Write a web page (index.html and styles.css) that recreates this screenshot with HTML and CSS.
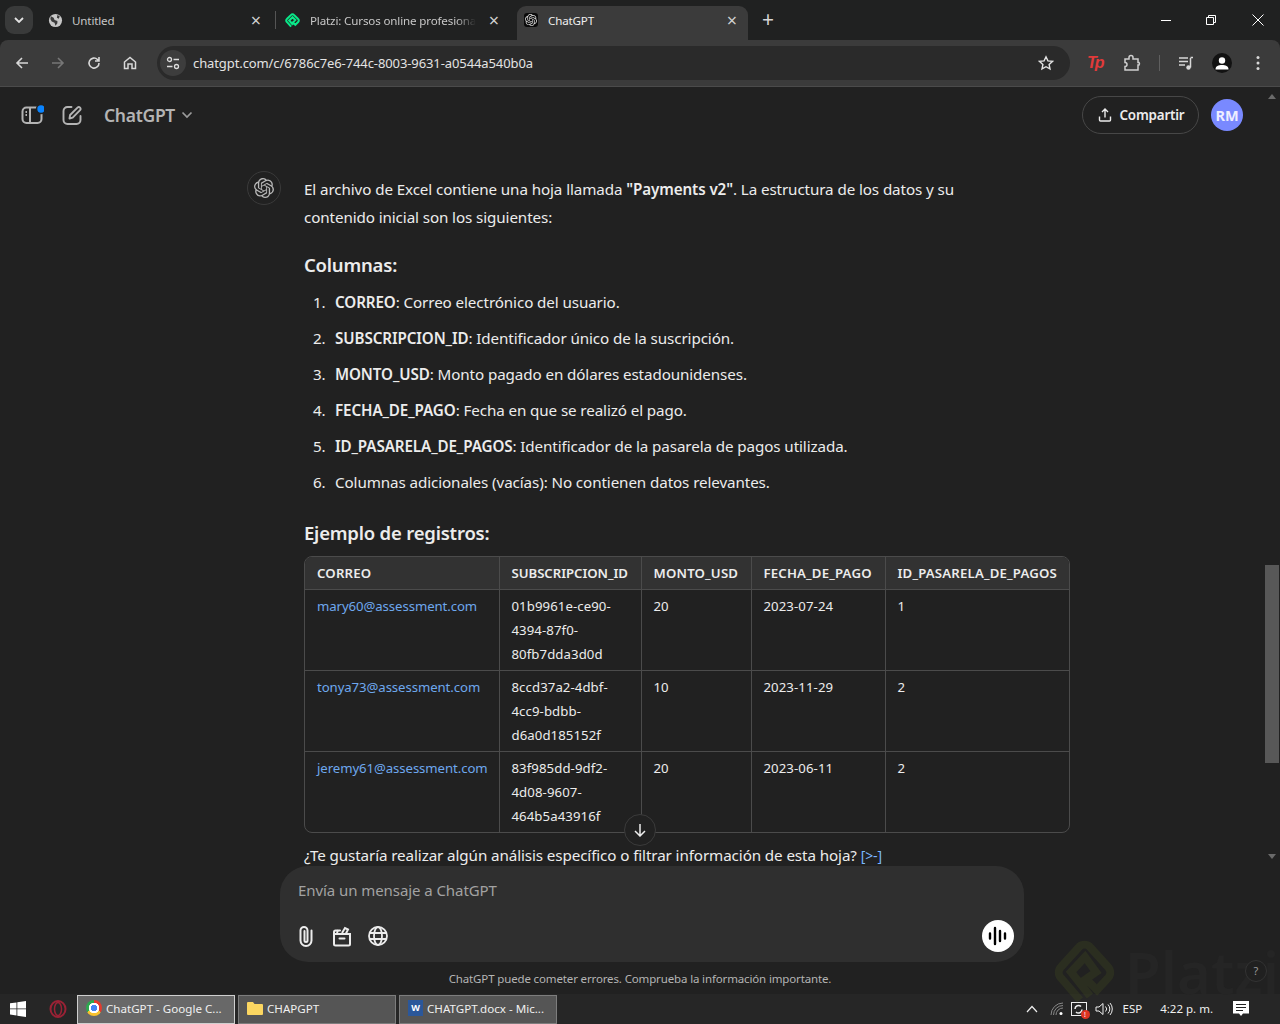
FILE: index.html
```html
<!DOCTYPE html>
<html lang="es">
<head>
<meta charset="utf-8">
<title>ChatGPT</title>
<link rel="stylesheet" href="styles.css">
</head>
<body>
<svg class="defs" width="0" height="0"><defs><symbol id="oai" viewBox="0 0 24 24"><path fill="currentColor" d="M22.2819 9.8211a5.9847 5.9847 0 0 0-.5157-4.9108 6.0462 6.0462 0 0 0-6.5098-2.9A6.0651 6.0651 0 0 0 4.9807 4.1818a5.9847 5.9847 0 0 0-3.9977 2.9 6.0462 6.0462 0 0 0 .7427 7.0966 5.98 5.98 0 0 0 .511 4.9107 6.051 6.051 0 0 0 6.5146 2.9001A5.9847 5.9847 0 0 0 13.2599 24a6.0557 6.0557 0 0 0 5.7718-4.2058 5.9894 5.9894 0 0 0 3.9977-2.9001 6.0557 6.0557 0 0 0-.7475-7.0729zm-9.022 12.6081a4.4755 4.4755 0 0 1-2.8764-1.0408l.1419-.0804 4.7783-2.7582a.7948.7948 0 0 0 .3927-.6813v-6.7369l2.02 1.1686a.071.071 0 0 1 .038.052v5.5826a4.504 4.504 0 0 1-4.4945 4.4944zm-9.6607-4.1254a4.4708 4.4708 0 0 1-.5346-3.0137l.142.0852 4.783 2.7582a.7712.7712 0 0 0 .7806 0l5.8428-3.3685v2.3324a.0804.0804 0 0 1-.0332.0615L9.74 19.9502a4.4992 4.4992 0 0 1-6.1408-1.6464zM2.3408 7.8956a4.485 4.485 0 0 1 2.3655-1.9728V11.6a.7664.7664 0 0 0 .3879.6765l5.8144 3.3543-2.0201 1.1685a.0757.0757 0 0 1-.071 0l-4.8303-2.7865A4.504 4.504 0 0 1 2.3408 7.872zm16.5963 3.8558L13.1038 8.364 15.1192 7.2a.0757.0757 0 0 1 .071 0l4.8303 2.7913a4.4944 4.4944 0 0 1-.6765 8.1042v-5.6772a.79.79 0 0 0-.407-.667zm2.0107-3.0231l-.142-.0852-4.7735-2.7818a.7759.7759 0 0 0-.7854 0L9.409 9.2297V6.8974a.0662.0662 0 0 1 .0284-.0615l4.8303-2.7866a4.4992 4.4992 0 0 1 6.6802 4.66zM8.3065 12.863l-2.02-1.1638a.0804.0804 0 0 1-.038-.0567V6.0742a4.4992 4.4992 0 0 1 7.3757-3.4537l-.142.0805L8.704 5.459a.7948.7948 0 0 0-.3927.6813zm1.0976-2.3654l2.602-1.4998 2.6069 1.4998v2.9994l-2.5974 1.4997-2.6067-1.4997Z"/></symbol></defs></svg>
<div class="screen">
  <div class="tabstrip">
    <div class="tabsearch"><svg width="10" height="6" viewBox="0 0 10 6"><path d="M1 1l4 4 4-4" fill="none" stroke="#e3e3e3" stroke-width="1.8"/></svg></div>
    <div class="tab tab-one">
      <svg class="favicon" viewBox="0 0 16 16"><circle cx="8" cy="8" r="7" fill="#c7c7c7"/><path d="M3 3.500l3 1.500 1 2.500 3 1v2.500l-2 2.500-1-3-3-1.500-1.500-2.500zM10 2l2.500 1.500-1 2.500-2-1z" fill="#3a3a3a"/></svg>
      <span class="tab-title">Untitled</span>
      <span class="tab-x">×</span>
    </div>
    <i class="tabsep"></i>
    <div class="tab tab-two">
      <svg class="favicon" viewBox="0 0 16 16"><path d="M6.500 14.500 2 9.500a2 2 0 0 1 0-3L6.500 2a2 2 0 0 1 3 0L14 6.500a2 2 0 0 1 0 3l-3 3-2.500-2.500 2.500-2.500L8 4.500 4.500 8l4 4.500" fill="none" stroke="#0ae98a" stroke-width="2.200"/></svg>
      <span class="tab-title tab-fade">Platzi: Cursos online profesionales</span>
      <span class="tab-x">×</span>
    </div>
    <div class="tab tab-active">
      <span class="favicon-box"><svg width="12" height="12" class="oai-light"><use href="#oai"/></svg></span>
      <span class="tab-title tab-title-active">ChatGPT</span>
      <span class="tab-x tab-x-active">×</span>
    </div>
    <span class="newtab">+</span>
    <div class="winctl">
      <svg class="winbtn" width="12" height="12" viewBox="0 0 12 12"><path d="M1 6.500h10" stroke="#fff"/></svg>
      <svg class="winbtn" width="12" height="12" viewBox="0 0 12 12"><path d="M1.500 3.500h7v7h-7zM3.500 3.500v-2h7v7h-2" fill="none" stroke="#fff"/></svg>
      <svg class="winbtn winclose" width="12" height="12" viewBox="0 0 12 12"><path d="M.5.500l11 11M11.500.500l-11 11" stroke="#fff"/></svg>
    </div>
  </div>
  <div class="toolbar">
    <div class="navbtns">
      <svg class="navbtn" viewBox="0 0 16 16"><path d="M14 8H3M8 3 3 8l5 5" fill="none" stroke="#d8d8d8" stroke-width="1.600"/></svg>
      <svg class="navbtn" viewBox="0 0 16 16"><path d="M2 8h11M8 3l5 5-5 5" fill="none" stroke="#777" stroke-width="1.600"/></svg>
      <svg class="navbtn" viewBox="0 0 16 16"><path d="M13 8a5 5 0 1 1-1.500-3.500L13 6M13 2v4H9" fill="none" stroke="#d8d8d8" stroke-width="1.600"/></svg>
      <svg class="navbtn" viewBox="0 0 16 16"><path d="M2.500 7 8 2.500 13.500 7v6.500h-3.500V9H6v4.500H2.500z" fill="none" stroke="#d8d8d8" stroke-width="1.500"/></svg>
    </div>
    <div class="omnibox">
      <span class="sitechip"><svg width="14" height="14" viewBox="0 0 14 14"><circle cx="3.500" cy="3.500" r="2" fill="none" stroke="#ddd" stroke-width="1.300"/><path d="M7.500 3.500H13M1 10.500h5.500" stroke="#ddd" stroke-width="1.300"/><circle cx="10.500" cy="10.500" r="2" fill="none" stroke="#ddd" stroke-width="1.300"/></svg></span>
      <span class="url">chatgpt.com/c/6786c7e6-744c-8003-9631-a0544a540b0a</span>
      <svg class="star" width="16" height="16" viewBox="0 0 16 16"><path d="M8 1.800l1.900 4.100 4.500.5-3.300 3 .9 4.500L8 11.700l-4 2.200.9-4.500-3.300-3 4.500-.5z" fill="none" stroke="#e3e3e3" stroke-width="1.400"/></svg>
    </div>
    <div class="exts">
      <span class="tp">Tp</span>
      <svg class="ext" width="18" height="18" viewBox="0 0 18 18"><path d="M2 5h4V3.500a2 2 0 0 1 4 0V5h5v3.500h1a2 2 0 0 1 0 2.500h-1V16H2v-3.500a2 2 0 0 0 0-4z" fill="none" stroke="#cfcfcf" stroke-width="1.500"/></svg>
      <i class="extsep"></i>
      <svg class="ext" width="16" height="16" viewBox="0 0 16 16"><path d="M1 3h9M1 6.500h9M1 10h6" stroke="#d8d8d8" stroke-width="1.500"/><path d="M12.500 3v9.500" stroke="#d8d8d8" stroke-width="1.500"/><path d="M12.500 2.500H15" stroke="#d8d8d8" stroke-width="1.500"/><circle cx="10.500" cy="12.500" r="2.200" fill="#d8d8d8"/></svg>
      <span class="profile"><svg width="16" height="16" viewBox="0 0 16 16"><circle cx="8" cy="5.500" r="3.200" fill="#fff"/><path d="M1.500 14.500c0-3.500 3-4.500 6.500-4.500s6.500 1 6.500 4.500z" fill="#fff"/></svg></span>
      <svg class="ext" width="16" height="16" viewBox="0 0 16 16"><circle cx="8" cy="2.500" r="1.500" fill="#d8d8d8"/><circle cx="8" cy="8" r="1.500" fill="#d8d8d8"/><circle cx="8" cy="13.500" r="1.500" fill="#d8d8d8"/></svg>
    </div>
  </div>
  <main class="page">
    <header class="topbar">
      <svg class="top-ico" width="24" height="24" viewBox="0 0 24 24"><rect x="2.500" y="4.500" width="19" height="15.500" rx="4" fill="none" stroke="#b4b4b4" stroke-width="2"/><path d="M10 4.500V20" stroke="#b4b4b4" stroke-width="2"/><path d="M5.500 9h1.500M5.500 12h1.500" stroke="#b4b4b4" stroke-width="1.800"/><circle cx="21" cy="6" r="5.200" fill="#212121"/><circle cx="21" cy="6" r="3.700" fill="#0a84ff"/></svg>
      <svg class="top-ico top-edit" width="24" height="24" viewBox="0 0 24 24"><path d="M20.500 13v4a4 4 0 0 1-4 4h-9a4 4 0 0 1-4-4V8a4 4 0 0 1 4-4h4" fill="none" stroke="#b4b4b4" stroke-width="1.900" stroke-linecap="round"/><path d="M9.500 15.500l.6-3.500 7.400-7.400a1.800 1.800 0 0 1 2.600 2.600l-7.400 7.400z" fill="none" stroke="#b4b4b4" stroke-width="1.900" stroke-linejoin="round"/></svg>
      <span class="model">ChatGPT</span>
      <svg class="model-chev" width="12" height="8" viewBox="0 0 12 8"><path d="M1.500 1.500 6 6l4.500-4.500" fill="none" stroke="#9b9b9b" stroke-width="1.700"/></svg>
      <button class="share"><svg width="16" height="16" viewBox="0 0 16 16"><path d="M8 10.500V2.500M5 5l3-3 3 3M2.500 9.500V13a1 1 0 0 0 1 1h9a1 1 0 0 0 1-1V9.500" fill="none" stroke="#ececec" stroke-width="1.400"/></svg>Compartir</button>
      <span class="avatar">RM</span>
    </header>
    <div class="thread">
      <div class="logo-col"><span class="logo-ring"><svg width="20" height="20" class="oai-grey"><use href="#oai"/></svg></span></div>
      <article class="msg">
        <p class="para">El archivo de Excel contiene una hoja llamada <b>"Payments v2"</b>. La estructura de los datos y su contenido inicial son los siguientes:</p>
        <h3 class="heading heading-cols">Columnas:</h3>
        <ol class="cols">
          <li><b>CORREO</b>: Correo electrónico del usuario.</li>
          <li><b>SUBSCRIPCION_ID</b>: Identificador único de la suscripción.</li>
          <li><b>MONTO_USD</b>: Monto pagado en dólares estadounidenses.</li>
          <li><b>FECHA_DE_PAGO</b>: Fecha en que se realizó el pago.</li>
          <li><b>ID_PASARELA_DE_PAGOS</b>: Identificador de la pasarela de pagos utilizada.</li>
          <li>Columnas adicionales (vacías): No contienen datos relevantes.</li>
        </ol>
        <h3 class="heading heading-ex">Ejemplo de registros:</h3>
        <div class="tablewrap">
          <table class="data">
            <thead><tr><th class="c1">CORREO</th><th class="c2 th-tight">SUBSCRIPCION_ID</th><th class="c3">MONTO_USD</th><th class="c4">FECHA_DE_PAGO</th><th class="c5">ID_PASARELA_DE_PAGOS</th></tr></thead>
            <tbody>
              <tr><td><a class="mail">mary60@assessment.com</a></td><td>01b9961e-ce90-<br>4394-87f0-<br>80fb7dda3d0d</td><td>20</td><td>2023-07-24</td><td>1</td></tr>
              <tr><td><a class="mail">tonya73@assessment.com</a></td><td>8ccd37a2-4dbf-<br>4cc9-bdbb-<br>d6a0d185152f</td><td>10</td><td>2023-11-29</td><td>2</td></tr>
              <tr><td><a class="mail">jeremy61@assessment.com</a></td><td>83f985dd-9df2-<br>4d08-9607-<br>464b5a43916f</td><td>20</td><td>2023-06-11</td><td>2</td></tr>
            </tbody>
          </table>
        </div>
        <p class="para closing">¿Te gustaría realizar algún análisis específico o filtrar información de esta hoja? <span class="cite">[&gt;-]</span></p>
      </article>
      <span class="scrolldown"><svg width="14" height="14" viewBox="0 0 14 14"><path d="M7 1v12M2 8l5 5 5-5" fill="none" stroke="#ececec" stroke-width="1.500"/></svg></span>
    </div>
    <div class="composer">
      <div class="placeholder">Envía un mensaje a ChatGPT</div>
      <div class="tools">
        <svg class="tool" width="20" height="22" viewBox="0 0 20 22"><path d="M15.500 5.500v10a5.500 5.500 0 0 1-11 0V5.500a3.500 3.500 0 0 1 7 0v10a1.500 1.500 0 0 1-3 0V6" fill="none" stroke="#ececec" stroke-width="2" stroke-linecap="round"/></svg>
        <svg class="tool" width="20" height="22" viewBox="0 0 20 22"><path d="M2 9h16v10a1.500 1.500 0 0 1-1.500 1.500h-13A1.500 1.500 0 0 1 2 19zM2 9V7a1.500 1.500 0 0 1 1.500-1.500H8M7.500 13.500h5" fill="none" stroke="#ececec" stroke-width="2" stroke-linecap="round"/><path d="M10 8l3-5 3 1.500-2 4M5 8l1-3" fill="none" stroke="#ececec" stroke-width="2"/></svg>
        <svg class="tool" width="20" height="20" viewBox="0 0 20 20"><circle cx="10" cy="10" r="9" fill="none" stroke="#ececec" stroke-width="1.800"/><ellipse cx="10" cy="10" rx="4" ry="9" fill="none" stroke="#ececec" stroke-width="1.800"/><path d="M1 7h18M1 13h18" stroke="#ececec" stroke-width="1.800"/></svg>
        <span class="voice"><svg width="20" height="20" viewBox="0 0 20 20"><path d="M2 7.500v5M7 2v16M12 5v10M17 7.500v5" stroke="#000" stroke-width="2.400" stroke-linecap="round"/></svg></span>
      </div>
    </div>
    <div class="disclaimer">ChatGPT puede cometer errores. Comprueba la información importante.</div>
    <div class="scrollbar"><i class="sb-up"></i><i class="sb-thumb"></i><i class="sb-down"></i></div>
    <div class="watermark"><svg width="64" height="64" viewBox="0 0 64 64"><path d="M27 60 8 38a8 8 0 0 1 0-11L26 7a8 8 0 0 1 11 0l18 20a8 8 0 0 1 0 11L44 50 33 39l10-7-11-15-14 15 19 24" fill="none" stroke="#3f4a1f" stroke-opacity=".33" stroke-width="8"/></svg><span class="wm-text">Platzi</span></div>
    <span class="help">?</span>
  </main>
  <footer class="taskbar">
    <svg class="start" width="16" height="16" viewBox="0 0 16 16"><path d="M0 2.300 6.500 1.400V7.500H0zM7.300 1.300 16 0V7.500H7.300zM0 8.300h6.500v6.200L0 13.600zM7.300 8.300H16V16L7.300 14.700z" fill="#fff"/></svg>
    <svg class="opera" width="18" height="18" viewBox="0 0 18 18"><ellipse cx="9" cy="9" rx="7.500" ry="8" fill="none" stroke="#9a2235" stroke-width="2"/><ellipse cx="9" cy="9" rx="3.500" ry="6.500" fill="none" stroke="#9a2235" stroke-width="1.500"/></svg>
    <div class="task task-active"><span class="chromeic"></span><span class="task-label">ChatGPT - Google C...</span></div>
    <div class="task"><svg width="16" height="14" viewBox="0 0 16 14"><path d="M0 2a1 1 0 0 1 1-1h5l1.500 2H15a1 1 0 0 1 1 1v9a1 1 0 0 1-1 1H1a1 1 0 0 1-1-1z" fill="#fbd661"/></svg><span class="task-label">CHAPGPT</span></div>
    <div class="task"><span class="wordic">W</span><span class="task-label">CHATGPT.docx - Mic...</span></div>
    <div class="tray">
      <svg width="12" height="8" viewBox="0 0 12 8"><path d="M1 7l5-5.500L11 7" fill="none" stroke="#eee" stroke-width="1.200"/></svg>
      <svg class="tray-net" width="14" height="14" viewBox="0 0 14 14"><path d="M1 13a12 12 0 0 1 12-12M3.500 13A9.500 9.500 0 0 1 13 3.500M6 13a7 7 0 0 1 7-7" fill="none" stroke="#888" stroke-width="1"/><circle cx="11" cy="11.500" r="1.500" fill="#fff"/></svg>
      <span class="tray-sec"><svg class="tray-glyph" width="13" height="11" viewBox="0 0 13 11"><path d="M3 5a3.500 3.500 0 0 1 6-2.500M10 5.500a3.500 3.500 0 0 1-6 2.500" fill="none" stroke="#eee" stroke-width="1.500"/></svg><i class="tray-dot">!</i></span>
      <svg class="tray-vol" width="18" height="14" viewBox="0 0 18 14"><path d="M1 5h3l4-3.500v11L4 9H1zM10.500 4.500a3.500 3.500 0 0 1 0 5M13 2.500a6.500 6.500 0 0 1 0 9M15 1a9 9 0 0 1 0 12" fill="none" stroke="#eee"/></svg>
      <span class="lang">ESP</span>
      <span class="clock">4:22 p. m.</span>
      <svg class="notif" width="16" height="16" viewBox="0 0 16 16"><path d="M0 0h16v12.500h-6L8 15l-2-2.500H0z" fill="#fff"/><path d="M3 3.500h10M3 6.500h10M3 9.500h7" stroke="#222"/></svg>
    </div>
  </footer>
</div>
</body>
</html>
```

FILE: styles.css
```css
* { box-sizing: border-box; }
html, body { margin: 0; padding: 0; height: 100%; background: #212121; }
body { font-family: "Noto Sans", "Open Sans", sans-serif; color: #ececec; overflow: hidden; }
.defs { position: absolute; }
.screen { width: 1280px; height: 1024px; display: flex; flex-direction: column; overflow: hidden; }

.tabstrip { height: 40px; flex: none; background: #202121; display: flex; align-items: flex-start; padding: 6px 0 0 5px; font-size: 11.600px; position: relative; }
.tabsearch { width: 28px; height: 28px; border-radius: 9px; background: #393a3a; display: flex; align-items: center; justify-content: center; }
.tab { height: 34px; display: flex; align-items: center; color: #c7c7c7; position: relative; padding-bottom: 6px; }
.tab-one { width: 219px; margin-left: 15px; }
.tab-two { width: 215px; margin-left: 9px; }
.tab-active { width: 231px; margin-left: 17px; background: #3b3b3b; border-radius: 9px 9px 0 0; padding-left: 7px; color: #eee; }
.favicon { width: 15px; height: 15px; flex: none; }
.favicon-box { width: 14px; height: 14px; background: #0a0a0a; border-radius: 3px; display: flex; align-items: center; justify-content: center; flex: none; }
.oai-light { color: #d8d8d8; }
.oai-grey { color: #b8b8b8; }
.tab-title { margin-left: 9px; white-space: nowrap; overflow: hidden; flex: 1; letter-spacing: -.15px; }
.tab-title-active { margin-left: 10px; }
.tab-fade { margin-left: 10px; max-width: 166px; -webkit-mask-image: linear-gradient(90deg, #000 88%, transparent); mask-image: linear-gradient(90deg, #000 88%, transparent); }
.tab-x { width: 12px; font-size: 18px; line-height: 18px; text-align: center; color: #d0d0d0; flex: none; margin-right: 5px; }
.tab-two .tab-x { margin-left: auto; margin-right: 0; }
.tab-x-active { margin-right: 10px; }
.tabsep { width: 1px; height: 18px; background: #555; margin: 5px 0 0 8px; flex: none; }
.newtab { margin: 0 0 0 14px; font-size: 21px; line-height: 26px; color: #d6d6d6; }
.winctl { position: absolute; right: 16px; top: 14px; display: flex; gap: 33px; }
.winbtn { display: block; }
.winclose { margin-left: 2px; }

.toolbar { height: 47px; flex: none; background: #3b3b3b; border-bottom: 1px solid #4b4b4b; display: flex; align-items: center; padding: 0 4px; border-radius: 8px 8px 0 0; }
.navbtns { display: flex; width: 153px; flex: none; }
.navbtn { width: 36px; height: 16px; }
.omnibox { width: 913px; height: 34px; border-radius: 17px; background: #2a2a2a; display: flex; align-items: center; padding: 0 16px 0 3px; flex: none; margin-top: -1px; }
.sitechip { width: 26px; height: 26px; border-radius: 50%; background: #3d3d3d; display: flex; align-items: center; justify-content: center; flex: none; }
.url { margin-left: 7px; font-size: 13px; color: #e3e3e3; flex: 1; letter-spacing: -.1px; }
.star { flex: none; }
.exts { margin-left: 17px; display: flex; align-items: center; height: 32px; }
.tp { font-family: "Liberation Sans", sans-serif; color: #e23a3a; font-weight: 700; font-style: italic; font-size: 16px; width: 18px; letter-spacing: -2px; line-height: 18px; }
.ext { flex: none; margin-left: 18px; }
.extsep { width: 1px; height: 16px; background: #5f5f5f; margin-left: 18px; flex: none; }
.profile { width: 20px; height: 20px; border-radius: 50%; background: #121212; display: flex; align-items: center; justify-content: center; margin-left: 18px; overflow: hidden; flex: none; }

.page { flex: 1; min-height: 0; background: #212121; display: flex; flex-direction: column; position: relative; }
.topbar { height: 56px; flex: none; display: flex; align-items: center; padding: 0 37px 0 20px; }
.top-ico { flex: none; display: block; }
.top-edit { margin-left: 16px; }
.model { margin-left: 20px; font-size: 17.500px; font-weight: 600; color: #b4b4b4; letter-spacing: -.3px; }
.model-chev { margin-left: 6px; }
.share { margin-left: auto; height: 38px; width: 117px; border: 1px solid #474747; border-radius: 19px; background: transparent; color: #ececec; font: 600 13.400px "Noto Sans", sans-serif; letter-spacing: -.2px; display: flex; align-items: center; justify-content: center; gap: 7px; padding: 0; }
.avatar { margin-left: 12px; width: 32px; height: 32px; border-radius: 50%; background: #7989ff; color: #eef; font-size: 14.500px; font-weight: 700; display: flex; align-items: center; justify-content: center; }

.thread { height: 723px; flex: none; overflow: hidden; display: flex; padding: 24px 0 0 247px; position: relative; }
.logo-col { width: 57px; flex: none; }
.logo-ring { width: 34px; height: 34px; border: 1px solid #3a3a3a; border-radius: 50%; display: flex; align-items: center; justify-content: center; margin-top: 4px; }
.msg { width: 766px; flex: none; font-size: 15.200px; line-height: 28px; letter-spacing: -.1px; }
.msg b { font-weight: 600; }
.para { margin: 8px 0 0; width: 680px; }
.heading { font-size: 18.500px; font-weight: 600; line-height: 28px; margin: 0; letter-spacing: -.2px; }
.heading-cols { margin-top: 20px; }
.heading-ex { margin-top: 23px; }
.cols { margin: 9px 0 0; padding: 0 0 0 31px; list-style: none; counter-reset: item; }
.cols li { line-height: 28px; margin-bottom: 8px; counter-increment: item; position: relative; }
.cols li::before { content: counter(item) "."; position: absolute; left: -22px; color: #ececec; }
.cols li:last-child { margin-bottom: 0; }
.tablewrap { margin-top: 9px; border: 1px solid #4b4b4b; border-radius: 8px; overflow: hidden; }
.data { width: 100%; border-collapse: collapse; table-layout: fixed; font-size: 13.200px; line-height: 24px; letter-spacing: .08px; }
.data th { height: 32px; padding: 0 0 0 12px; background: #323232; text-align: left; font-weight: 600; border-bottom: 1px solid #4b4b4b; white-space: nowrap; letter-spacing: .18px; }
.data .th-tight { letter-spacing: -.05px; }
.data td { padding: 4px 0 4px 12px; vertical-align: top; border-top: 1px solid #4b4b4b; height: 81px; }
.data th, .data td { border-left: 1px solid #4b4b4b; }
.data th:first-child, .data td:first-child { border-left: 0; }
.c1 { width: 194px; }
.c2 { width: 142px; }
.c3 { width: 110px; }
.c4 { width: 134px; }
.mail { color: #6ea8ee; letter-spacing: -.08px; }
.closing { margin-top: 8px; width: auto; }
.cite { color: #7ab7ff; font-size: 14px; }
.scrolldown { position: absolute; left: 624px; top: 671px; width: 32px; height: 32px; border-radius: 50%; border: 1px solid #3b3b3b; background: #212121; display: flex; align-items: center; justify-content: center; }

.composer { width: 744px; height: 96px; flex: none; margin-left: 280px; background: #2f2f2f; border-radius: 28px; padding: 12px 10px 0 18px; position: relative; z-index: 1; }
.placeholder { font-size: 15px; line-height: 24px; color: #a2a2a2; letter-spacing: -.07px; }
.tools { display: flex; align-items: center; gap: 16px; margin: 18px 0 0 -2px; position: relative; height: 32px; }
.tool { display: block; flex: none; }
.voice { margin-left: auto; width: 32px; height: 32px; border-radius: 50%; background: #fff; display: flex; align-items: center; justify-content: center; }
.disclaimer { height: 32px; flex: none; text-align: center; font-size: 11.500px; line-height: 34px; color: #b4b4b4; letter-spacing: -.14px; }
.scrollbar { position: absolute; right: 0; top: 0; width: 16px; height: 780px; display: flex; flex-direction: column; align-items: center; background: #212121; }
.sb-up { margin-top: 7px; width: 0; height: 0; border: 4px solid transparent; border-top: 0; border-bottom: 5px solid #6a6a6a; }
.sb-thumb { position: absolute; left: 1px; top: 478px; width: 14px; height: 198px; background: #585858; }
.sb-down { position: absolute; top: 767px; width: 0; height: 0; border: 4px solid transparent; border-bottom: 0; border-top: 5px solid #6a6a6a; }
.watermark { position: absolute; left: 1053px; top: 853px; display: flex; align-items: center; pointer-events: none; z-index: 2; }
.wm-text { font-size: 58px; font-weight: 600; color: #252525; margin-left: 8px; line-height: 64px; }
.help { position: absolute; left: 1245px; top: 873px; width: 22px; height: 22px; border: 1px solid #333; border-radius: 50%; color: #999; font-size: 11px; line-height: 20px; text-align: center; background: #202020; z-index: 3; }

.taskbar { height: 30px; flex: none; background: #262626; display: flex; align-items: center; font-size: 11.600px; color: #f0f0f0; }
.start { margin-left: 10px; flex: none; }
.opera { margin-left: 23px; flex: none; }
.task { width: 158px; height: 29px; background: #555; border: 1px solid #7d7d7d; display: flex; align-items: center; gap: 4px; padding: 0 0 2px 8px; margin-left: 3px; flex: none; white-space: nowrap; }
.task-active { margin-left: 10px; background: #686868; border-color: #cfcfcf; }
.chromeic { width: 16px; height: 16px; border-radius: 50%; background: radial-gradient(circle, #4285f4 0 3px, #fff 3.500px 5px, transparent 5.500px), conic-gradient(#e33b2e 0 33%, #f9c22e 33% 66%, #2da94f 66%); flex: none; }
.wordic { width: 15px; height: 16px; background: #2b579a; color: #fff; font-size: 9px; font-weight: 700; line-height: 16px; text-align: center; flex: none; }
.tray { margin-left: auto; display: flex; align-items: center; padding-right: 31px; }
.tray-net { margin-left: 12px; }
.tray-sec { margin-left: 7px; width: 16px; height: 14px; border: 1.500px solid #eee; position: relative; display: flex; align-items: center; justify-content: center; }
.tray-glyph { display: block; flex: none; }
.tray-dot { position: absolute; right: -4px; bottom: -4px; width: 9px; height: 9px; border-radius: 50%; background: #d32; color: #fff; font-size: 7px; line-height: 9px; text-align: center; font-style: normal; }
.tray-vol { margin-left: 8px; }
.lang { margin: 0 0 2px 10px; font-size: 11.500px; }
.clock { margin: 0 0 2px 18px; font-size: 11.500px; }
.notif { margin-left: 20px; }
```
